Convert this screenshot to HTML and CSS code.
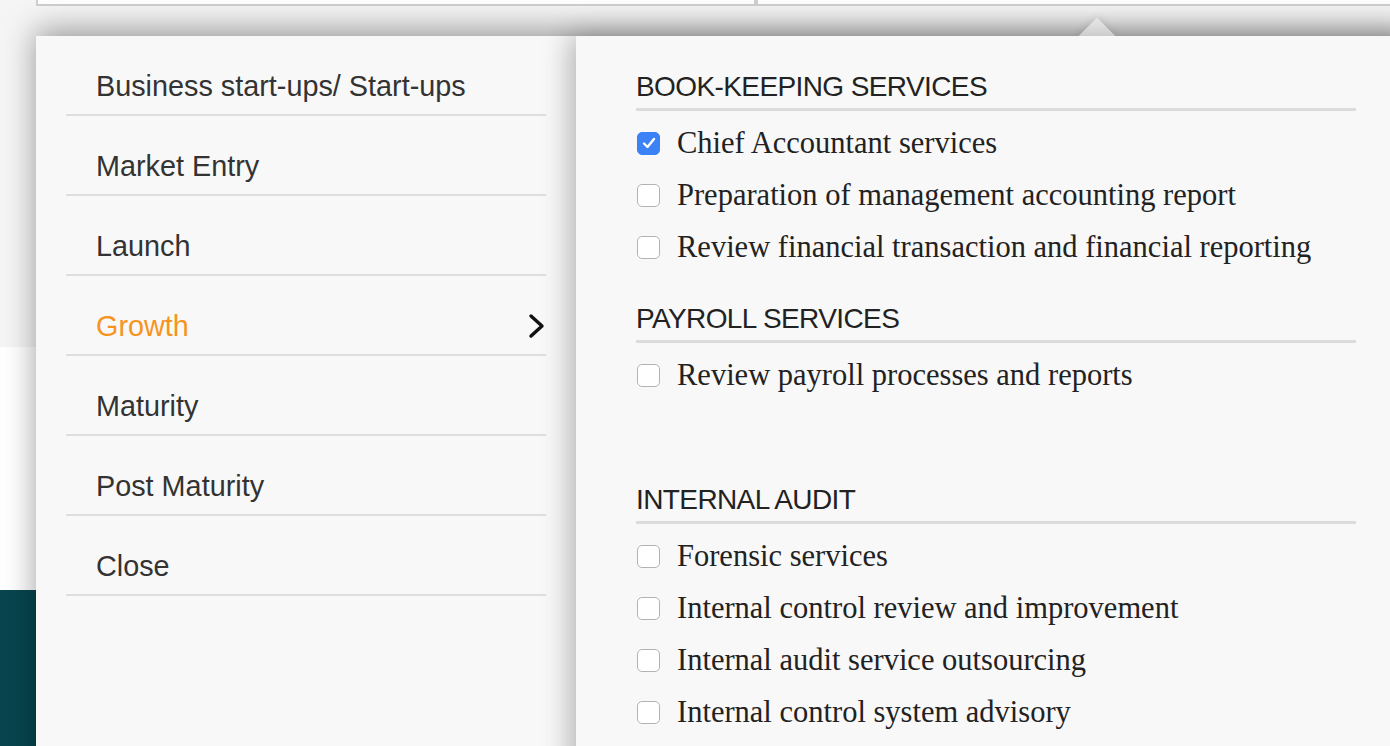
FILE: index.html
```html
<!DOCTYPE html>
<html lang="en">
<head>
<meta charset="utf-8">
<title>Services menu</title>
<link rel="stylesheet" href="styles.css">
</head>
<body>
<div class="page">
  <section class="hero">
    <div class="fields">
      <div class="field"></div>
      <div class="field"></div>
    </div>
  </section>
  <section class="band"></section>
  <section class="footer"></section>

  <div class="dropdown">
    <span class="dropdown-arrow"></span>
    <nav class="stages">
      <ul class="stage-list">
        <li class="stage">Business start-ups/ Start-ups</li>
        <li class="stage">Market Entry</li>
        <li class="stage">Launch</li>
        <li class="stage stage--active">Growth
          <svg class="chevron" width="18" height="26" viewBox="0 0 18 26"><polyline points="3,3 14,13 3,23" fill="none" stroke="#111" stroke-width="3.4" stroke-linecap="round" stroke-linejoin="round"/></svg>
        </li>
        <li class="stage">Maturity</li>
        <li class="stage">Post Maturity</li>
        <li class="stage">Close</li>
      </ul>
    </nav>
    <div class="services">
      <div class="group">
        <h3 class="group-title">BOOK-KEEPING SERVICES</h3>
        <ul class="options">
          <li class="option"><span class="box box--checked"><svg width="14" height="12" viewBox="0 0 14 12"><polyline points="2,6.5 5.5,10 12,2" fill="none" stroke="#fff" stroke-width="2.4" stroke-linecap="round" stroke-linejoin="round"/></svg></span>Chief Accountant services</li>
          <li class="option"><span class="box"></span>Preparation of management accounting report</li>
          <li class="option"><span class="box"></span>Review financial transaction and financial reporting</li>
        </ul>
      </div>
      <div class="group group--short">
        <h3 class="group-title">PAYROLL SERVICES</h3>
        <ul class="options">
          <li class="option"><span class="box"></span>Review payroll processes and reports</li>
        </ul>
      </div>
      <div class="group">
        <h3 class="group-title">INTERNAL AUDIT</h3>
        <ul class="options">
          <li class="option"><span class="box"></span>Forensic services</li>
          <li class="option"><span class="box"></span>Internal control review and improvement</li>
          <li class="option"><span class="box"></span>Internal audit service outsourcing</li>
          <li class="option"><span class="box"></span>Internal control system advisory</li>
        </ul>
      </div>
    </div>
  </div>
</div>
</body>
</html>
```
FILE: styles.css
```css
html, body {
  margin: 0;
  padding: 0;
  height: 100%;
  overflow: hidden;
}
body {
  font-family: "Liberation Sans", Arial, sans-serif;
  background: #07464e;
}
.page {
  position: relative;
  width: 1390px;
  height: 746px;
  overflow: hidden;
}
.hero {
  height: 347px;
  background: #f5f5f5;
}
.fields {
  display: flex;
  padding-left: 36px;
  height: 6px;
}
.field {
  width: 716px;
  flex: none;
  background: #fff;
  border: 2px solid #cfcfcf;
  border-top: none;
}
.band {
  height: 243px;
  background: #fff;
}
.footer {
  height: 156px;
  background: #07464e;
}

.dropdown {
  position: absolute;
  top: 36px;
  left: 36px;
  width: 1380px;
  height: 760px;
  display: flex;
  box-shadow: 0 -6px 30px rgba(0, 0, 0, 0.38);
}
.dropdown-arrow {
  position: absolute;
  top: -13px;
  left: 1048px;
  width: 26px;
  height: 26px;
  background: #ececec;
  transform: rotate(45deg);
  box-shadow: 0 0 10px rgba(0, 0, 0, 0.12);
  z-index: 0;
}
.stages {
  width: 540px;
  flex: none;
  background: #f8f8f8;
  padding: 0 30px;
  box-sizing: border-box;
  position: relative;
  z-index: 1;
}
.stage-list {
  list-style: none;
  margin: 0;
  padding: 0;
}
.stage {
  display: flex;
  align-items: center;
  justify-content: space-between;
  padding: 34px 0 12px 30px;
  line-height: 32px;
  font-size: 28.8px;
  color: #333;
  border-bottom: 2px solid #dedede;
}
.stage--active {
  color: #f7941d;
}
.chevron {
  display: block;
}

.services {
  width: 840px;
  flex: none;
  background: #f8f8f8;
  padding: 35px 60px 0;
  box-sizing: border-box;
  position: relative;
  z-index: 2;
  box-shadow: -6px 0 26px rgba(0, 0, 0, 0.28);
}
.group {
  margin-bottom: 30px;
}
.group--short {
  padding-bottom: 53px;
}
.group-title {
  margin: 0;
  font-weight: normal;
  font-size: 28px;
  letter-spacing: -0.6px;
  line-height: 32px;
  color: #222;
  padding-bottom: 5px;
  border-bottom: 3px solid #dcdcdc;
}
.options {
  list-style: none;
  margin: 6px 0 0;
  padding: 0;
}
.option {
  display: flex;
  align-items: center;
  height: 52px;
  font-family: "Liberation Serif", "Times New Roman", serif;
  font-size: 30.5px;
  color: #222;
}
.box {
  width: 21px;
  height: 21px;
  flex: none;
  margin-left: 1px;
  margin-right: 17px;
  border: 1px solid #b3b3b3;
  border-radius: 5px;
  background: #fff;
  display: flex;
  align-items: center;
  justify-content: center;
  box-sizing: content-box;
}
.box--checked {
  background: #3b82f6;
  border-color: #3b82f6;
}
```
